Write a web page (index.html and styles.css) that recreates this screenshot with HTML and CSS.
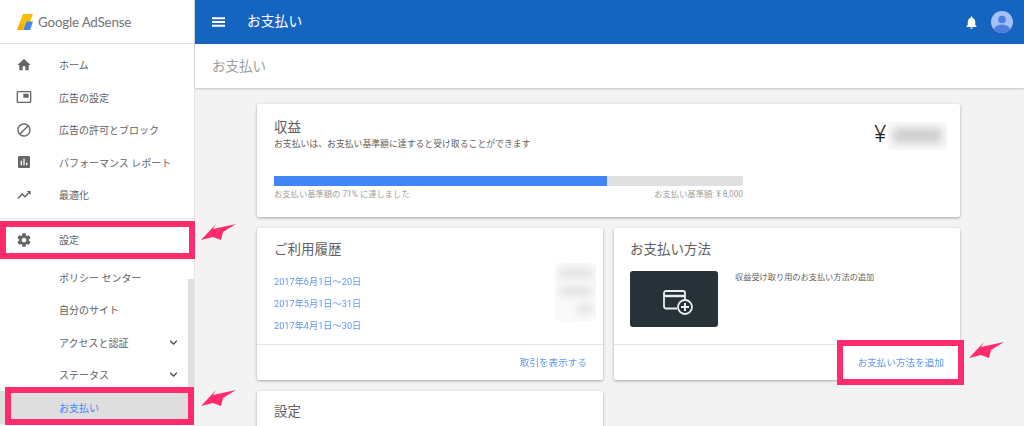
FILE: index.html
```html
<!DOCTYPE html>
<html lang="ja">
<head>
<meta charset="utf-8">
<title>お支払い</title>
<link rel="stylesheet" href="styles.css">
</head>
<body>
<div class="app">
  <aside class="sidebar">
    <div class="brand">
      <svg class="brand-logo" viewBox="0 0 16 16"><path fill="#fbbc04" d="M0 16 6 0h10L10 16z"/><path fill="#4285f4" d="M6.5 16 9.500 7.500H16L13 16z"/><path fill="#f9ab00" d="M0 16 2.200 10H7l-2.200 6z"/></svg>
      <span class="brand-name">Google AdSense</span>
    </div>
    <nav class="nav nav-main">
      <a class="nav-item"><svg class="nav-icon" viewBox="0 0 24 24"><path d="M10 20v-6h4v6h5v-8h3L12 3 2 12h3v8z"/></svg><span>ホーム</span></a>
      <a class="nav-item"><svg class="nav-icon" viewBox="0 0 24 24"><path d="M19 7h-8v6h8V7zm2-4H3c-1.100 0-2 .9-2 2v14c0 1.100.9 1.980 2 1.980h18c1.100 0 2-.88 2-1.980V5c0-1.100-.9-2-2-2zm0 16.010H3V4.980h18v14.030z"/></svg><span>広告の設定</span></a>
      <a class="nav-item"><svg class="nav-icon" viewBox="0 0 24 24"><path d="M12 2C6.480 2 2 6.480 2 12s4.480 10 10 10 10-4.480 10-10S17.520 2 12 2zM4 12c0-4.420 3.580-8 8-8 1.850 0 3.550.63 4.900 1.690L5.690 16.900C4.630 15.550 4 13.850 4 12zm8 8c-1.850 0-3.550-.63-4.900-1.690L18.310 7.100C19.370 8.450 20 10.150 20 12c0 4.420-3.580 8-8 8z"/></svg><span>広告の許可とブロック</span></a>
      <a class="nav-item"><svg class="nav-icon" viewBox="0 0 24 24"><path d="M19 3H5c-1.100 0-2 .9-2 2v14c0 1.100.9 2 2 2h14c1.100 0 2-.9 2-2V5c0-1.100-.9-2-2-2zM9 17H7v-7h2v7zm4 0h-2V7h2v10zm4 0h-2v-4h2v4z"/></svg><span>パフォーマンス レポート</span></a>
      <a class="nav-item"><svg class="nav-icon" viewBox="0 0 24 24"><path d="M16 6l2.290 2.290-4.880 4.880-4-4L2 16.590 3.410 18l6-6 4 4 6.300-6.290L22 12V6z"/></svg><span>最適化</span></a>
    </nav>
    <nav class="nav nav-settings">
      <a class="nav-item nav-item-settings"><svg class="nav-icon" viewBox="0 0 24 24"><path d="M19.430 12.980c.04-.32.07-.64.07-.98s-.03-.66-.07-.98l2.110-1.650c.19-.15.24-.42.12-.64l-2-3.460c-.12-.22-.39-.3-.61-.22l-2.490 1c-.52-.4-1.080-.73-1.690-.98l-.38-2.650C14.460 2.180 14.250 2 14 2h-4c-.25 0-.46.18-.49.42l-.38 2.650c-.61.25-1.170.59-1.690.98l-2.490-1c-.23-.09-.49 0-.61.22l-2 3.460c-.13.22-.07.49.12.64l2.110 1.650c-.04.32-.07.65-.07.98s.03.66.07.98l-2.110 1.650c-.19.15-.24.42-.12.64l2 3.460c.12.22.39.3.61.22l2.490-1c.52.4 1.080.73 1.690.98l.38 2.650c.03.24.24.42.49.42h4c.25 0 .46-.18.49-.42l.38-2.650c.61-.25 1.170-.59 1.690-.98l2.490 1c.23.09.49 0 .61-.22l2-3.460c.12-.22.07-.49-.12-.64l-2.110-1.650zM12 15.500c-1.930 0-3.500-1.570-3.500-3.500s1.570-3.500 3.500-3.500 3.500 1.570 3.500 3.500-1.570 3.500-3.500 3.500z"/></svg><span>設定</span></a>
      <a class="nav-item nav-sub"><span>ポリシー センター</span></a>
      <a class="nav-item nav-sub"><span>自分のサイト</span></a>
      <a class="nav-item nav-sub"><span>アクセスと認証</span><svg class="nav-chevron" viewBox="0 0 24 24"><path d="M16.590 8.590L12 13.170 7.410 8.590 6 10l6 6 6-6z"/></svg></a>
      <a class="nav-item nav-sub"><span>ステータス</span><svg class="nav-chevron" viewBox="0 0 24 24"><path d="M16.590 8.590L12 13.170 7.410 8.590 6 10l6 6 6-6z"/></svg></a>
      <a class="nav-item nav-sub nav-active"><span>お支払い</span></a>
    </nav>
    <div class="scrollbar"></div>
  </aside>

  <div class="content">
    <header class="topbar">
      <svg class="menu-icon" viewBox="0 0 14 10"><path d="M0 0h14v2H0zM0 4h14v2H0zM0 8h14v2H0z"/></svg>
      <h1 class="topbar-title">お支払い</h1>
      <svg class="bell" viewBox="0 0 24 24"><path d="M12 22c1.100 0 2-.9 2-2h-4c0 1.100.9 2 2 2zm6-6v-5c0-3.070-1.630-5.640-4.500-6.320V4c0-.83-.67-1.500-1.500-1.500s-1.500.67-1.500 1.500v.68C7.640 5.360 6 7.920 6 11v5l-2 2v1h16v-1l-2-2z"/></svg>
      <svg class="avatar" viewBox="0 0 22 22"><defs><clipPath id="av"><circle cx="11" cy="11" r="11"/></clipPath></defs><g clip-path="url(#av)"><rect width="22" height="22" fill="#a3c0f7"/><circle cx="11" cy="8.500" r="3.800" fill="#4f7fdc"/><ellipse cx="11" cy="19" rx="8" ry="5.500" fill="#4f7fdc"/></g></svg>
    </header>
    <div class="subbar">お支払い</div>
    <main class="main">
      <section class="card card-wide earnings">
        <div class="earnings-head">
          <div>
            <h2 class="card-title">収益</h2>
            <p class="earnings-desc">お支払いは、お支払い基準額に達すると受け取ることができます</p>
          </div>
          <div class="balance"><span class="yen">¥</span><span class="blur-box blur-balance"><i></i></span></div>
        </div>
        <div class="progress"><div class="progress-fill"></div></div>
        <div class="progress-labels"><span>お支払い基準額の 71% に達しました</span><span>お支払い基準額: ¥ 8,000</span></div>
      </section>

      <section class="card history">
        <div class="card-body">
          <h2 class="card-title">ご利用履歴</h2>
          <div class="history-body">
            <ul class="history-list">
              <li>2017年6月1日～20日</li>
              <li>2017年5月1日～31日</li>
              <li>2017年4月1日～30日</li>
            </ul>
            <div class="blur-box blur-history"><i></i><i></i><i class="short"></i></div>
          </div>
        </div>
        <div class="card-foot"><a class="link">取引を表示する</a></div>
      </section>

      <section class="card method">
        <div class="card-body card-body-method">
          <h2 class="card-title">お支払い方法</h2>
          <div class="method-body">
            <div class="method-thumb">
              <svg class="method-icon" viewBox="0 0 30 25" fill="none" stroke="#eceff1" stroke-width="1.800"><path d="M14 18.500H3a2 2 0 0 1-2-2V3a2 2 0 0 1 2-2h17a2 2 0 0 1 2 2v7"/><path d="M1 6h21" stroke-width="2.400"/><circle cx="22" cy="17" r="7" fill="#263238"/><path d="M22 13v8M18 17h8" stroke-width="2"/></svg>
            </div>
            <p class="method-text">収益受け取り用のお支払い方法の追加</p>
          </div>
        </div>
        <div class="card-foot card-foot-method"><a class="link">お支払い方法を追加</a></div>
      </section>

      <section class="card settings-card">
        <h2 class="card-title">設定</h2>
      </section>
    </main>
  </div>

  <div class="mark mark-settings"></div>
  <div class="mark mark-active"></div>
  <div class="mark mark-add"></div>
  <svg class="arrow arrow-1" viewBox="0 0 36 18"><path d="M0 16 15 0 12 5 35 0 22 8 20 16 12 13z"/></svg>
  <svg class="arrow arrow-2" viewBox="0 0 36 18"><path d="M0 16 15 0 12 5 35 0 22 8 20 16 12 13z"/></svg>
  <svg class="arrow arrow-3" viewBox="0 0 36 18"><path d="M0 16 15 0 12 5 35 0 22 8 20 16 12 13z"/></svg>
</div>
</body>
</html>
```

FILE: styles.css
```css
* { box-sizing: border-box; }
html, body { margin: 0; height: 100%; overflow: hidden; }
body {
  font-family: Roboto, "Noto Sans CJK JP", sans-serif;
  color: #616161;
  background: #f3f3f3;
}
h1, h2, p, ul { margin: 0; padding: 0; font-weight: 400; }
ul { list-style: none; }

.app { position: relative; display: flex; width: 1024px; height: 426px; overflow: hidden; }

/* Sidebar */
.sidebar {
  position: relative;
  flex: 0 0 195px;
  height: 426px;
  background: #fff;
  border-right: 1px solid #e6e6e6;
  overflow: hidden;
}
.brand {
  display: flex;
  align-items: center;
  gap: 5px;
  height: 44px;
  padding-left: 17px;
  border-bottom: 1px solid #e4e4e4;
}
.brand-logo { width: 16px; height: 16px; flex: none; }
.brand-name { font-family: Lato, sans-serif; font-size: 13.4px; color: #757575; letter-spacing: -.2px; }
.nav-main { padding: 4.5px 0 0; border-bottom: 1px solid #e4e4e4; height: 175px; }
.nav-settings { padding-top: 4px; }
.nav-item {
  display: flex;
  align-items: center;
  height: 32.5px;
  padding-left: 16px;
  font-size: 10px;
  color: #616161;
}
.nav-item-settings { height: 33px; margin-bottom: 5px; }
.nav-icon { width: 16px; height: 16px; margin-right: 27px; fill: #666; flex: none; }
.nav-sub { padding-left: 59px; }
.nav-chevron { width: 15px; height: 15px; margin-left: auto; margin-right: 13px; fill: #444; }
.nav-active { color: #4285f4; background: #dedede; }
.scrollbar { position: absolute; right: 0; top: 279px; width: 6px; height: 108px; background: #e0e0e0; }

/* Content */
.content { flex: 1; min-width: 0; }
.topbar {
  display: flex;
  align-items: center;
  height: 44px;
  padding: 0 11px 0 17px;
  background: #1565c0;
  color: #fff;
  box-shadow: 0 1px 2px rgba(0, 0, 0, .35);
  position: relative;
}
.menu-icon { width: 13px; height: 10px; fill: #fff; flex: none; }
.topbar-title { font-size: 13.8px; line-height: 18px; margin: -2px 0 0 22px; flex: 1; }
.bell { width: 15px; height: 15px; fill: #fff; margin-right: 12px; }
.avatar { width: 22px; height: 22px; }
.subbar {
  display: flex;
  align-items: center;
  height: 44px;
  padding: 0 0 3px 17px;
  background: #fff;
  font-size: 13.5px;
  color: #9e9e9e;
  box-shadow: 0 1px 2px rgba(0, 0, 0, .2);
  position: relative;
}
.main {
  display: grid;
  grid-template-columns: 346px 346px;
  grid-template-rows: 113px 152px 100px;
  gap: 11px;
  padding: 16px 0 0 62px;
}

/* Cards */
.card {
  background: #fff;
  border-radius: 2px;
  box-shadow: 0 1px 3px rgba(0, 0, 0, .32);
}
.card-wide { grid-column: 1 / 3; }
.card-title { font-size: 13.5px; line-height: 18px; color: #5f5f5f; }
.earnings { padding: 14px 17px 0; }
.earnings-head { display: flex; justify-content: space-between; height: 58px; }
.earnings-desc { font-size: 8.85px; line-height: 14px; margin-top: 1px; color: #616161; }
.balance { display: flex; align-items: flex-start; margin-right: -4px; }
.yen { font-size: 23px; font-weight: 300; line-height: 34px; color: #222; margin-right: 2px; }
.blur-box { display: block; background: #fafafa; overflow: hidden; }
.blur-box i { display: block; background: #cdcdcd; filter: blur(4px); }
.blur-balance { width: 59px; height: 28px; margin-top: 4px; padding: 6px 5px; }
.blur-balance i { height: 15px; }
.progress { height: 10px; width: 469px; background: #e0e0e0; }
.progress-fill { height: 100%; width: 71%; background: #4285f4; }
.progress-labels {
  display: flex;
  justify-content: space-between;
  width: 469px;
  margin-top: 2px;
  font-size: 8.3px;
  line-height: 12px;
  color: #a0a0a0;
}
.card-body { height: 116px; padding: 12px 17px 0; }
.card-body-method { padding-left: 16px; }
.card-foot {
  display: flex;
  align-items: center;
  justify-content: flex-end;
  height: 36px;
  padding: 0 16px 2px 0;
  border-top: 1px solid #e6e6e6;
}
.link { font-size: 9.6px; color: #4285f4; opacity: .85; }
.history-body { display: flex; justify-content: space-between; margin: 5px -10px 0 0; }
.history-list { padding-top: 8px; font-size: 9.2px; color: #4285f4; opacity: .85; }
.history-list li { height: 22px; line-height: 22px; }
.blur-history { width: 41px; height: 58px; padding: 6px 4px; display: flex; flex-direction: column; gap: 10px; align-items: flex-end; }
.blur-history i { width: 32px; height: 8px; background: #dcdcdc; }
.blur-history i.short { width: 14px; }
.method-body { display: flex; margin-top: 13px; }
.method-thumb {
  flex: none;
  display: flex;
  align-items: center;
  justify-content: center;
  width: 88px;
  height: 56px;
  background: #263238;
  border-radius: 3px;
}
.method-icon { width: 30px; height: 25px; margin: 6px 0 0 8px; }
.method-text { font-size: 8.2px; line-height: 12px; margin: 0 0 0 17px; color: #616161; }
.settings-card { padding: 11px 17px; }

/* Annotations */
.mark { position: absolute; border: 6px solid #ff2c6d; pointer-events: none; }
.mark-settings { left: 0; top: 221px; width: 195px; height: 38px; }
.mark-active { left: 5px; top: 387px; width: 189px; height: 38px; }
.mark-add { left: 837px; top: 340px; width: 127px; height: 45px; }
.arrow { position: absolute; width: 36px; height: 18px; fill: #ff2c6d; }
.arrow-1 { left: 201px; top: 224px; }
.arrow-2 { left: 201px; top: 390px; }
.arrow-3 { left: 969px; top: 342px; }
```
